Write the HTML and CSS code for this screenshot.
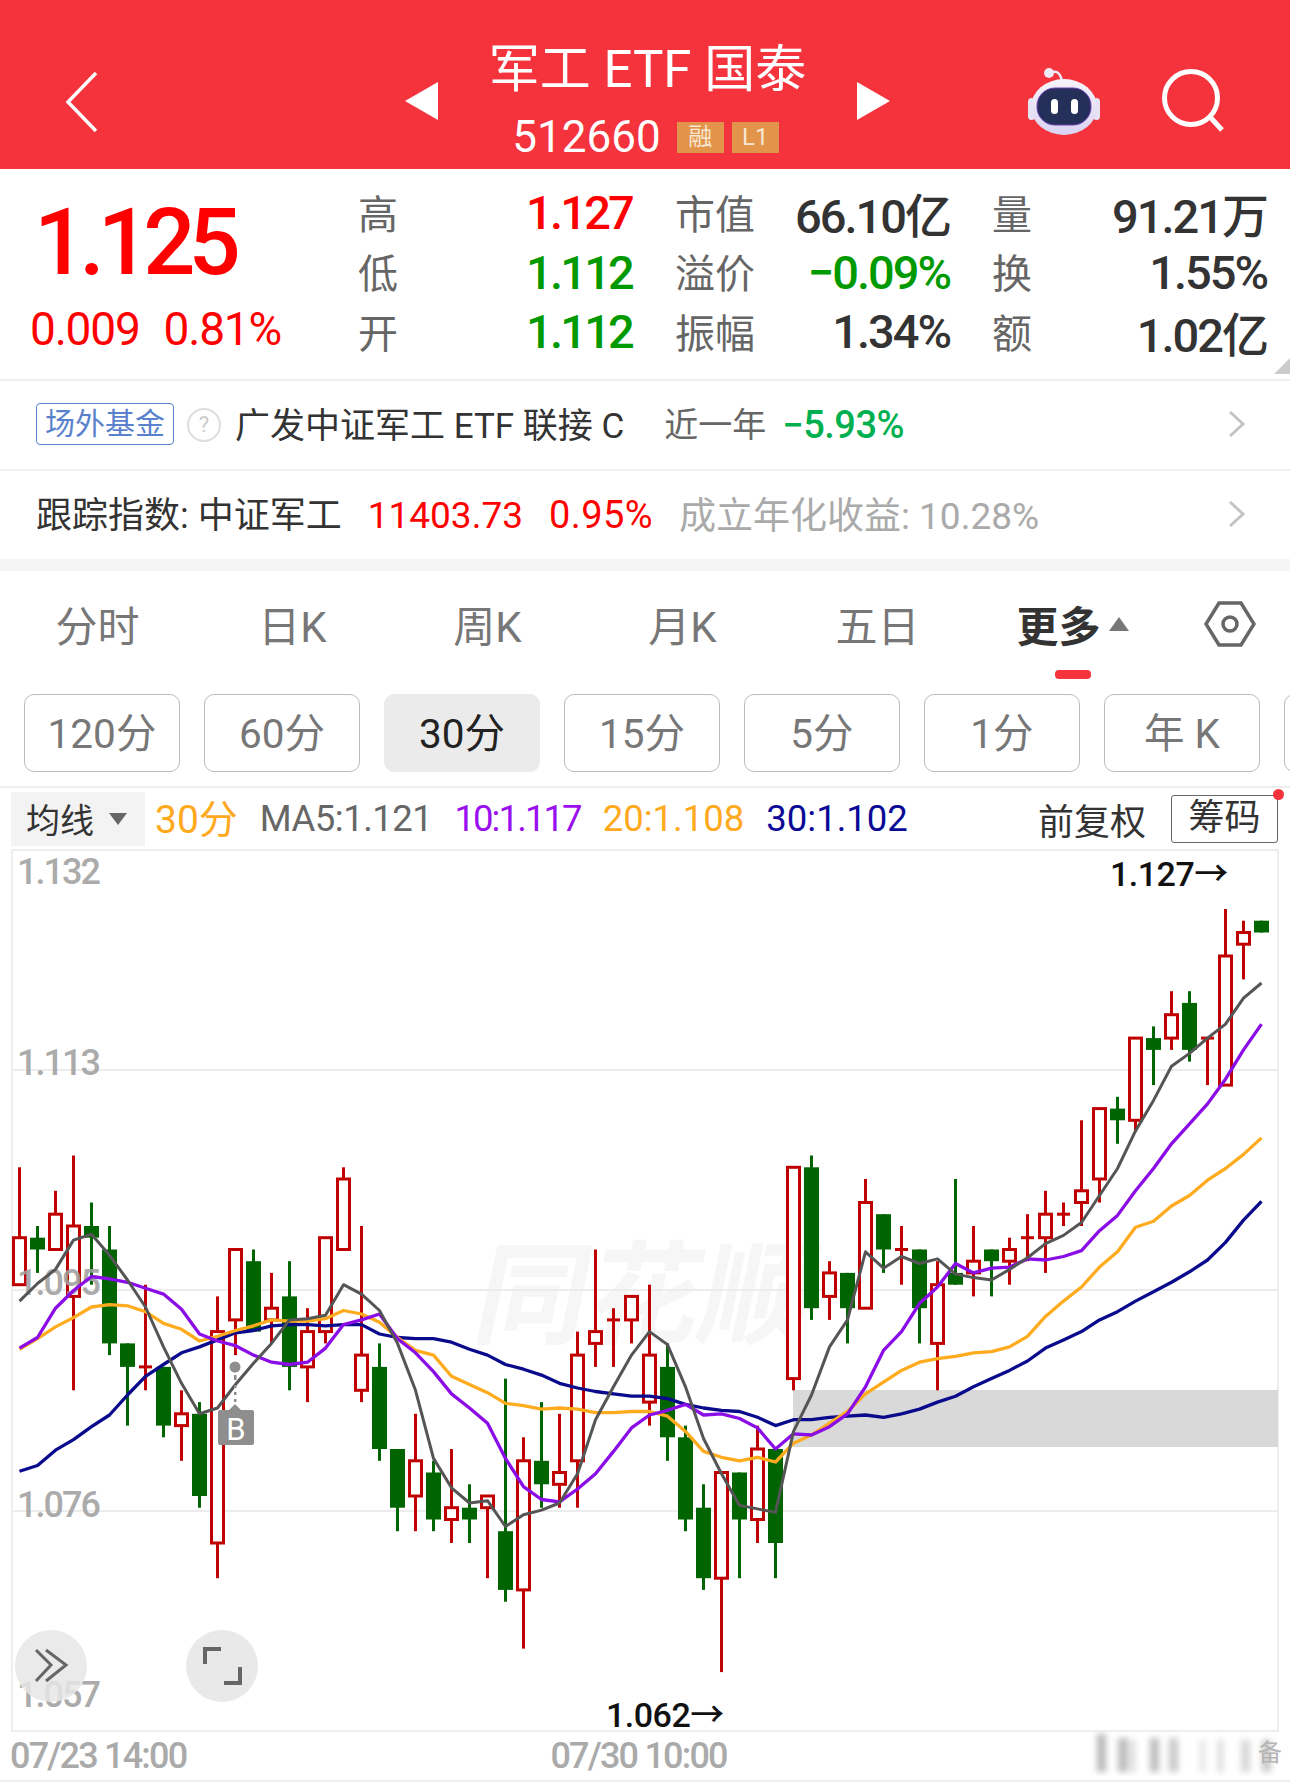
FILE: index.html
```html
<!DOCTYPE html>
<html lang="zh-CN">
<head>
    <meta charset="UTF-8">
    <meta name="viewport" content="width=device-width, initial-scale=1.0">
    <title>军工ETF国泰 512660</title>
    <link rel="stylesheet" href="styles.css">
</head>
<body>
    <header class="top-bar">
        <div class="top-left">
            <svg class="back-icon" width="34" height="62" viewBox="0 0 34 62"><path d="M31 2 L3 31 L31 60" fill="none" stroke="#fff" stroke-width="3.5"/></svg>
        </div>
        <div class="top-center">
            <span class="arrow arrow-left"></span>
            <div class="title-box">
                <div class="title">军工 ETF 国泰</div>
                <div class="code-row">
                    <span class="code">512660</span>
                    <span class="code-tag">融</span>
                    <span class="code-tag">L1</span>
                </div>
            </div>
            <span class="arrow arrow-right"></span>
        </div>
        <div class="top-right">
            <svg class="robot-icon" width="76" height="70" viewBox="0 0 76 70">
                <defs>
                    <linearGradient id="headFill" x1="0" y1="0" x2="0" y2="1">
                        <stop offset="0" stop-color="#f7f4fb"/>
                        <stop offset="1" stop-color="#d9d3f2"/>
                    </linearGradient>
                </defs>
                <path d="M24 7 C30 4 34 6 36 15" fill="none" stroke="#efe9f5" stroke-width="2.5"/>
                <circle cx="23" cy="7" r="5" fill="#eee9f4"/>
                <rect x="2" y="32" width="7" height="22" rx="3.5" fill="#e6e1f3"/>
                <rect x="67" y="32" width="7" height="22" rx="3.5" fill="#e6e1f3"/>
                <ellipse cx="38" cy="41" rx="33" ry="28" fill="url(#headFill)"/>
                <rect x="11" y="22" width="54" height="37" rx="18" fill="#24305a" stroke="#6a3fb0" stroke-width="1"/>
                <rect x="25" y="33" width="7" height="15" rx="3.5" fill="#fff"/>
                <rect x="45" y="33" width="7" height="15" rx="3.5" fill="#fff"/>
            </svg>
            <svg class="search-icon" width="68" height="68" viewBox="0 0 68 68">
                <circle cx="31" cy="31" r="26.5" fill="none" stroke="#fff" stroke-width="5"/>
                <path d="M50 50 L62 63" stroke="#fff" stroke-width="5"/>
            </svg>
        </div>
    </header>

    <section class="quote">
        <div class="quote-main">
            <div class="price">1.125</div>
            <div class="change"><span>0.009</span><span>0.81%</span></div>
        </div>
        <div class="quote-groups">
            <div class="quote-group group-prices">
                <span class="q-label">高</span><span class="q-value up">1.127</span>
                <span class="q-label">低</span><span class="q-value down">1.112</span>
                <span class="q-label">开</span><span class="q-value down">1.112</span>
            </div>
            <div class="quote-group">
                <span class="q-label">市值</span><span class="q-value">66.10亿</span>
                <span class="q-label">溢价</span><span class="q-value down">−0.09%</span>
                <span class="q-label">振幅</span><span class="q-value">1.34%</span>
            </div>
            <div class="quote-group group-last">
                <span class="q-label">量</span><span class="q-value">91.21万</span>
                <span class="q-label">换</span><span class="q-value">1.55%</span>
                <span class="q-label">额</span><span class="q-value">1.02亿</span>
            </div>
        </div>
        <span class="corner-mark"></span>
    </section>

    <a class="info-row fund-row">
        <span class="fund-badge">场外基金</span>
        <span class="help-icon">?</span>
        <span class="fund-name">广发中证军工 ETF 联接 C</span>
        <span class="fund-period">近一年</span>
        <span class="fund-return">−5.93%</span>
        <svg class="row-arrow" width="19" height="26" viewBox="0 0 19 26"><path d="M3 1 L16 13 L3 25" fill="none" stroke="#c4c4c4" stroke-width="3"/></svg>
    </a>

    <a class="info-row index-row">
        <span class="index-name">跟踪指数: 中证军工</span>
        <span class="index-num">11403.73</span>
        <span class="index-num index-pct">0.95%</span>
        <span class="index-yield">成立年化收益: 10.28%</span>
        <svg class="row-arrow" width="19" height="26" viewBox="0 0 19 26"><path d="M3 1 L16 13 L3 25" fill="none" stroke="#c4c4c4" stroke-width="3"/></svg>
    </a>

    <div class="band"></div>

    <nav class="tabs">
        <span class="tab">分时</span>
        <span class="tab">日K</span>
        <span class="tab">周K</span>
        <span class="tab">月K</span>
        <span class="tab">五日</span>
        <span class="tab tab-active">更多<i class="tab-caret"></i></span>
        <span class="tab">
            <svg width="52" height="48" viewBox="0 0 52 48"><path d="M15 3 H37 L50 24 L37 45 H15 L2 24 Z" fill="none" stroke="#666" stroke-width="3.5"/><circle cx="26" cy="24" r="7" fill="none" stroke="#666" stroke-width="3.5"/></svg>
        </span>
    </nav>

    <div class="periods">
        <span class="period">120分</span>
        <span class="period">60分</span>
        <span class="period period-active">30分</span>
        <span class="period">15分</span>
        <span class="period">5分</span>
        <span class="period">1分</span>
        <span class="period">年 K</span>
        <span class="period"></span>
    </div>

    <div class="ma-row">
        <span class="ma-select">均线<i class="ma-caret"></i></span>
        <span class="ma-period c-orange">30分</span>
        <span class="ma-item ma-five c-grey">MA5:1.121</span>
        <span class="ma-item ma-tight c-purple">10:1.117</span>
        <span class="ma-item c-orange">20:1.108</span>
        <span class="ma-item c-navy">30:1.102</span>
        <span class="ma-adjust">前复权</span>
        <span class="ma-chip">筹码</span>
    </div>

    <div id="chart" class="chart"></div>

    <div class="axis">
        <span class="axis-time">07/23 14:00</span>
        <span class="axis-time">07/30 10:00</span>
        <svg class="smudge" width="225" height="46" viewBox="0 0 225 46">
            <defs><filter id="soft"><feGaussianBlur stdDeviation="3"/></filter></defs>
            <g filter="url(#soft)" fill="#9a9a9a">
                <rect x="32" y="2" width="9" height="38" opacity=".7"/>
                <rect x="53" y="6" width="10" height="34" opacity=".65"/>
                <rect x="66" y="8" width="4" height="32" opacity=".45"/>
                <rect x="85" y="6" width="9" height="34" opacity=".65"/>
                <rect x="104" y="6" width="9" height="34" opacity=".55"/>
                <rect x="135" y="8" width="5" height="32" opacity=".3"/>
                <rect x="153" y="8" width="5" height="32" opacity=".4"/>
                <rect x="176" y="8" width="9" height="32" opacity=".4"/>
                <rect x="197" y="8" width="9" height="32" opacity=".55"/>
            </g>
        </svg>
        <span class="axis-mark">备</span>
    </div>

    <script src="script.js"></script>
</body>
</html>
```

FILE: styles.css
```css
* {
    box-sizing: border-box;
}

body {
    margin: 0;
    width: 1290px;
    height: 1782px;
    overflow: hidden;
    background: #ffffff;
    font-family: Roboto, "Noto Sans CJK SC", sans-serif;
    color: #333333;
}

/* top bar */
.top-bar {
    height: 169px;
    background: #f4333d;
    display: grid;
    grid-template-columns: 400px 490px 400px;
    color: #ffffff;
}

.top-left {
    padding: 71px 0 0 65px;
}

.back-icon, .robot-icon, .search-icon {
    display: block;
}

.top-center {
    display: flex;
    justify-content: space-between;
    align-items: flex-start;
    padding: 0 0 0 5px;
}

.arrow {
    margin-top: 82px;
    width: 0;
    height: 0;
    border-top: 19px solid transparent;
    border-bottom: 19px solid transparent;
}

.arrow-left {
    border-right: 33px solid #ffffff;
}

.arrow-right {
    border-left: 33px solid #ffffff;
}

.title-box {
    padding-top: 39px;
    text-align: center;
}

.title {
    font-size: 51px;
    line-height: 62px;
    white-space: nowrap;
}

.code-row {
    margin-top: 14px;
    padding-right: 4px;
    display: flex;
    justify-content: center;
    align-items: center;
    gap: 8px;
    height: 44px;
}

.code {
    font-size: 44px;
    margin-right: 8px;
}

.code-tag {
    width: 47px;
    height: 31px;
    line-height: 31px;
    background: #e2954a;
    color: #f8e6d2;
    font-size: 24px;
    text-align: center;
}

.top-right {
    display: flex;
    justify-content: flex-end;
    align-items: flex-start;
    gap: 58px;
    padding: 66px 62px 0 0;
}

.search-icon {
    margin-top: 1px;
}

/* quote */
.quote {
    position: relative;
    height: 212px;
    display: flex;
    border-bottom: 2px solid #eeeeee;
}

.quote-main {
    width: 358px;
    padding: 20px 0 0 30px;
    color: #ff0000;
}

.price {
    font-size: 92px;
    line-height: 108px;
    font-weight: 500;
    letter-spacing: -7px;
    padding-left: 4px;
}

.change {
    display: flex;
    gap: 24px;
    margin-top: 6px;
    font-size: 46px;
    line-height: 52px;
    letter-spacing: -1.2px;
}

.quote-groups {
    display: flex;
    gap: 43px;
    padding-top: 14px;
}

.quote-group {
    width: 275px;
    display: grid;
    grid-template-columns: auto 1fr;
    grid-auto-rows: 59.5px;
    align-items: center;
}

.group-prices {
    width: 274px;
}

.group-last {
    margin-left: -1px;
}

.q-label {
    font-size: 40px;
    color: #666666;
    margin-bottom: 2px;
}

.q-value {
    font-size: 47px;
    font-weight: 500;
    text-align: right;
    color: #333333;
    letter-spacing: -2px;
    white-space: nowrap;
}

.group-prices .q-value {
    letter-spacing: -2.8px;
}

.up {
    color: #ff0000;
}

.down {
    color: #009900;
}

.corner-mark {
    position: absolute;
    right: 0;
    bottom: 5px;
    width: 0;
    height: 0;
    border-left: 16px solid transparent;
    border-bottom: 16px solid #cccccc;
}

/* info rows */
.info-row {
    display: flex;
    align-items: center;
    position: relative;
    height: 90px;
    padding-left: 36px;
    border-bottom: 2px solid #f0f0f0;
}

.fund-badge {
    width: 138px;
    height: 42px;
    line-height: 40px;
    border: 1.5px solid #5a82cc;
    border-radius: 4px;
    color: #5a82cc;
    font-size: 30px;
    text-align: center;
    margin-top: -2px;
}

.help-icon {
    width: 34px;
    height: 34px;
    margin-left: 13px;
    border: 2.5px solid #dddddd;
    border-radius: 50%;
    color: #cccccc;
    font-size: 22px;
    line-height: 29px;
    text-align: center;
}

.fund-name {
    margin: 0 0 6px 14px;
    font-size: 35px;
    color: #333333;
    white-space: nowrap;
}

.fund-period {
    margin: 0 0 5px 40px;
    font-size: 34px;
    color: #666666;
}

.fund-return {
    margin-left: 16px;
    font-size: 38px;
    font-weight: 500;
    color: #00b050;
    letter-spacing: -0.5px;
}

.row-arrow {
    position: absolute;
    right: 44px;
    top: 30px;
}

.index-row {
    height: 88px;
    border-bottom: 0;
}

.index-name {
    margin-bottom: 6px;
    font-size: 36px;
    color: #333333;
    white-space: nowrap;
}

.index-num {
    margin-left: 26px;
    font-size: 37px;
    color: #ff0000;
}

.index-pct {
    font-size: 38px;
    letter-spacing: 0.4px;
}

.index-yield {
    margin: 0 0 5px 26px;
    font-size: 37px;
    color: #aaaaaa;
    white-space: nowrap;
}

.band {
    height: 12px;
    background: #f5f5f5;
}

/* tabs */
.tabs {
    height: 123px;
    display: grid;
    grid-template-columns: repeat(6, 195px) 120px;
    position: relative;
}

.tab {
    display: flex;
    justify-content: center;
    align-items: center;
    padding-bottom: 18px;
    font-size: 42px;
    color: #777777;
}

.tab-active {
    font-weight: 700;
    color: #333333;
    position: relative;
}

.tab-active::after {
    content: "";
    position: absolute;
    left: 80px;
    top: 99px;
    width: 36px;
    height: 9px;
    background: #f4333d;
    border-radius: 4px;
}

.tab-caret {
    margin-left: 8px;
    width: 0;
    height: 0;
    border-left: 10px solid transparent;
    border-right: 10px solid transparent;
    border-bottom: 14px solid #777777;
}

.periods {
    display: flex;
    gap: 26px;
    padding-left: 24px;
    height: 94px;
    border-bottom: 2px solid #eeeeee;
    overflow: hidden;
}

.period {
    flex: 0 0 156px;
    height: 78px;
    border: 1.5px solid #bbbbbb;
    border-radius: 10px;
    color: #777777;
    font-size: 40.5px;
    line-height: 78px;
    text-align: center;
}

.period + .period {
    margin-left: -2px;
}

.period-active {
    background: #ebebeb;
    border-color: #ebebeb;
    color: #222222;
}

/* ma row */
.ma-row {
    display: flex;
    align-items: center;
    height: 61px;
    padding: 0 12px 0 11px;
    position: relative;
}

.ma-select {
    display: flex;
    align-items: center;
    width: 134px;
    height: 54px;
    padding-left: 15px;
    background: #f3f3f3;
    color: #333333;
    font-size: 34px;
}

.ma-caret {
    margin-left: 15px;
    width: 0;
    height: 0;
    border-left: 9px solid transparent;
    border-right: 9px solid transparent;
    border-top: 12px solid #666666;
}

.ma-period {
    margin: 0 0 6px 10px;
    font-size: 39px;
    white-space: nowrap;
}

.ma-item {
    margin-left: 22px;
    font-size: 36.5px;
    white-space: nowrap;
}

.ma-five {
    letter-spacing: -0.5px;
}

.ma-tight {
    letter-spacing: -1.9px;
}

.c-orange {
    color: #ffa91f;
}

.c-grey {
    color: #666666;
}

.c-purple {
    color: #9a10ee;
}

.c-navy {
    color: #0a0a96;
}

.ma-adjust {
    margin-left: auto;
    font-size: 36px;
    color: #333333;
}

.ma-chip {
    width: 107px;
    height: 48px;
    margin-left: 25px;
    border: 1.5px solid #666666;
    border-radius: 3px;
    font-size: 36px;
    line-height: 44px;
    text-align: center;
    position: relative;
}

.ma-chip::after {
    content: "";
    position: absolute;
    right: -7px;
    top: -7px;
    width: 11px;
    height: 11px;
    border-radius: 50%;
    background: #f4333d;
}

/* chart */
.chart {
    height: 883px;
}

.chart svg {
    display: block;
}

.axis {
    position: relative;
    height: 50px;
    border-bottom: 2px solid #eeeeee;
    padding-left: 10px;
    display: flex;
    gap: 364px;
    align-items: center;
}

.axis-time {
    font-size: 36px;
    font-weight: 500;
    color: #aaaaaa;
    letter-spacing: -1.8px;
}

.smudge {
    position: absolute;
    right: 0;
    top: 0;
}

.axis-mark {
    position: absolute;
    right: 8px;
    top: 6px;
    font-size: 24px;
    line-height: 30px;
    color: #b5b5b5;
}
```

FILE: script.js
```js
// candles: high, body top, body bottom, low (prices in 0.001), r = up, g = down
const candles = [
    [1105,1099,1095,1095,"r"],[1100,1099,1098,1096,"g"],[1103,1101,1098,1098,"r"],[1106,1100,1094,1086,"r"],
    [1102,1100,1099,1095,"g"],[1100,1098,1090,1089,"g"],[1090,1090,1088,1083,"g"],[1095,1088,1088,1086,"r"],
    [1088,1088,1083,1082,"g"],[1086,1084,1083,1080,"r"],[1085,1084,1077,1076,"g"],[1094,1091,1073,1070,"r"],
    [1098,1098,1092,1089,"r"],[1098,1097,1091,1091,"g"],[1096,1093,1092,1090,"r"],[1097,1094,1088,1086,"g"],
    [1093,1091,1088,1085,"r"],[1099,1099,1091,1090,"r"],[1105,1104,1098,1098,"r"],[1100,1089,1086,1085,"r"],
    [1090,1088,1081,1080,"g"],[1081,1081,1076,1074,"g"],[1084,1080,1077,1074,"r"],[1080,1079,1075,1074,"g"],
    [1081,1076,1075,1073,"r"],[1078,1076,1075,1073,"g"],[1077,1077,1076,1070,"r"],[1087,1074,1069,1068,"g"],
    [1082,1080,1069,1064,"r"],[1085,1080,1078,1076,"g"],[1084,1079,1078,1076,"r"],[1091,1089,1080,1076,"r"],
    [1098,1091,1090,1088,"r"],[1093,1092,1092,1088,"r"],[1094,1094,1092,1090,"r"],[1095,1089,1085,1083,"r"],
    [1090,1088,1082,1080,"g"],[1083,1082,1075,1074,"g"],[1078,1076,1070,1069,"g"],[1079,1079,1070,1062,"r"],
    [1079,1079,1075,1070,"g"],[1083,1081,1075,1073,"r"],[1081,1081,1073,1070,"g"],[1105,1105,1087,1086,"r"],
    [1106,1105,1093,1092,"g"],[1097,1096,1094,1092,"r"],[1096,1096,1093,1090,"g"],[1104,1102,1093,1093,"r"],
    [1101,1101,1098,1096,"g"],[1100,1098,1098,1095,"r"],[1098,1098,1093,1090,"g"],[1097,1095,1090,1086,"r"],
    [1104,1096,1095,1095,"g"],[1100,1097,1096,1094,"r"],[1098,1098,1097,1094,"g"],[1099,1098,1097,1095,"r"],
    [1101,1099,1099,1097,"r"],[1103,1101,1099,1096,"r"],[1102,1101,1101,1100,"r"],[1109,1103,1102,1100,"r"],
    [1110,1110,1104,1102,"r"],[1111,1110,1109,1107,"g"],[1116,1116,1109,1108,"r"],[1117,1116,1115,1112,"g"],
    [1120,1118,1116,1115,"r"],[1120,1119,1115,1114,"g"],[1116,1116,1116,1112,"r"],[1127,1123,1112,1112,"r"],
    [1126,1125,1124,1121,"r"],[1126,1126,1125,1125,"g"]
];

const ma5 = [1093.6,1095.1,1096.3,1098.8,1099.3,1097.5,1095.4,1093.1,1089.7,1086.6,1084,1084.5,1086.5,1088.3,1090,1092,1092.1,1092.4,1095,1094.2,1092.8,1090,1086,1080.2,1077.7,1076.4,1076.6,1074.4,1075.4,1075.8,1076.4,1078.9,1083.5,1086.3,1089,1091,1089.9,1086.3,1081.9,1078.9,1076.2,1075.9,1075.6,1082.5,1085.6,1089.7,1092,1097.8,1096.4,1097.4,1096.8,1097.2,1095.9,1095.6,1095.4,1096.3,1097.3,1098.5,1099.2,1100.3,1102.6,1104.9,1108.1,1110.7,1113.6,1114.7,1116,1117.2,1119.4,1120.7];
const ma10 = [1089.6,1090.5,1093,1094.5,1095.7,1095.5,1095.2,1094.7,1094.2,1092.9,1090.8,1090.2,1089.8,1089,1088.4,1088.2,1088.4,1089.6,1091.6,1092,1092.5,1090.4,1089.2,1087.6,1085.7,1084.5,1083.2,1080.2,1077.8,1076.7,1076.5,1077.6,1078.9,1080.8,1082.8,1083.9,1084.3,1084.8,1083.9,1084,1083.6,1082.8,1081,1082.3,1082.2,1082.9,1084,1086.3,1089.4,1091,1093.4,1094.8,1096.8,1096,1096.4,1096.5,1097.2,1097.1,1097.4,1097.9,1099.6,1100.9,1103,1104.9,1107,1108.7,1110.4,1112.5,1115,1117.2];
const ma20 = [1089.5,1090.4,1091.4,1092.2,1093.1,1093.3,1093.2,1092.7,1091.7,1091.2,1090.2,1090.6,1091.1,1091.5,1092,1091.9,1091.9,1092.1,1092.8,1092.5,1091.8,1090.5,1089.4,1089,1087.2,1086.5,1085.8,1084.9,1084.7,1084.4,1084.5,1084.4,1084.1,1084.1,1084.2,1084.2,1083.8,1082.5,1080.8,1080.3,1080,1080.3,1079.9,1081.5,1082.2,1083.2,1084.2,1085.7,1086.7,1087.7,1088.4,1088.7,1088.9,1089.2,1089.3,1089.7,1090.6,1092.3,1093.6,1094.8,1096.5,1097.8,1099.9,1100.4,1101.7,1102.6,1103.9,1104.9,1106.1,1107.5];
const ma30 = [1079.1,1079.6,1080.9,1081.8,1082.9,1083.9,1085.6,1087.2,1088.2,1089.2,1089.7,1090.3,1090.9,1091.1,1091.5,1091.6,1091.6,1091.5,1091.6,1091.6,1090.8,1090.5,1090.4,1090.4,1090.1,1089.5,1089,1088.2,1087.8,1087.3,1086.6,1086.2,1085.9,1085.7,1085.5,1085.5,1085.3,1084.8,1084.5,1084.3,1084.2,1083.7,1083,1083.5,1083.5,1083.7,1083.8,1083.9,1083.7,1084,1084.4,1085,1085.5,1086.3,1087,1087.7,1088.5,1089.6,1090.3,1091,1092,1092.7,1093.6,1094.4,1095.2,1096.1,1097.1,1098.6,1100.5,1102.1];

const RED = "#c00000";
const GREEN = "#006400";

function px(i) { return 19.5 + 18 * i; }
function py(p) { return +(909 + (1127 - p) * 11.74).toFixed(1); }

function drawCandle(c, i) {
    const x = px(i);
    const color = c[4] === "r" ? RED : GREEN;
    let out = `<rect x="${x - 1.5}" y="${py(c[0])}" width="3" height="${(py(c[3]) - py(c[0])).toFixed(1)}" fill="${color}"/>`;
    if (c[1] === c[2]) {
        out += `<rect x="${x - 6.5}" y="${py(c[1]) - 1.5}" width="13" height="3" fill="${color}"/>`;
    } else if (c[4] === "r") {
        out += `<rect x="${x - 6}" y="${py(c[1])}" width="12" height="${(py(c[2]) - py(c[1])).toFixed(1)}" fill="#fff" stroke="${color}" stroke-width="3"/>`;
    } else {
        out += `<rect x="${x - 7.5}" y="${py(c[1])}" width="15" height="${(py(c[2]) - py(c[1])).toFixed(1)}" fill="${color}"/>`;
    }
    return out;
}

function drawLine(values, color, width) {
    const pts = values.map((v, i) => px(i) + "," + py(v)).join(" ");
    return `<polyline points="${pts}" fill="none" stroke="${color}" stroke-width="${width}" stroke-linejoin="round"/>`;
}

const axisLabels = [["1.132", 884], ["1.113", 1075], ["1.095", 1295], ["1.076", 1517], ["1.057", 1707]];

let svg = `<svg width="1290" height="903" viewBox="0 849 1290 903">`;
svg += `<rect x="12" y="850" width="1266" height="881" fill="#fff" stroke="#eee" stroke-width="2"/>`;
svg += `<text transform="translate(470 1335) skewX(-12)" font-size="112" font-weight="700" fill="#f6f6f6" font-family="'Noto Sans CJK SC', sans-serif">同花顺</text>`;
svg += `<rect x="793" y="1390" width="485" height="57" fill="#d9d9d9"/>`;
[1070, 1290, 1511].forEach(y => {
    svg += `<rect x="12" y="${y - 1}" width="1266" height="2" fill="#ececec"/>`;
});
svg += candles.map(drawCandle).join("");
axisLabels.forEach(a => {
    svg += `<text x="17" y="${a[1]}" font-size="36" font-weight="500" fill="#a0a0a0" fill-opacity=".9" letter-spacing="-2">${a[0]}</text>`;
});
svg += drawLine(ma30, "#0a0a8c", 3.3);
svg += drawLine(ma20, "#ffab1f", 3.3);
svg += drawLine(ma10, "#8a0ce6", 3.3);
svg += drawLine(ma5, "#555555", 3);

// high and low marks
svg += `<text x="1110" y="886" font-size="34" font-weight="500" fill="#111" letter-spacing="-0.5">1.127→</text>`;
svg += `<text x="606" y="1727" font-size="34" font-weight="500" fill="#111" letter-spacing="-0.5">1.062→</text>`;

// buy mark
svg += `<g fill="#8e8e8e">`;
svg += `<circle cx="235" cy="1367" r="5.5"/><rect x="234" y="1375" width="2.5" height="5"/><rect x="234" y="1385" width="2.5" height="3"/><rect x="234" y="1392" width="2.5" height="3"/><rect x="234" y="1399" width="2.5" height="3"/>`;
svg += `<path d="M218 1412 a2 2 0 0 1 2 -2 H229 L235 1404 L241 1410 H252 a2 2 0 0 1 2 2 V1443 a2 2 0 0 1 -2 2 H220 a2 2 0 0 1 -2 -2 Z"/>`;
svg += `</g>`;
svg += `<text x="236" y="1440" font-size="31" fill="#fff" text-anchor="middle">B</text>`;

// round chart buttons
svg += `<circle cx="51" cy="1666" r="36" fill="#e6e6e6" opacity=".85"/>`;
svg += `<path d="M36 1650 L51 1665 L36 1681 M46 1650 L66 1665 L46 1681" fill="none" stroke="#666" stroke-width="3"/>`;
svg += `<circle cx="222" cy="1666" r="36" fill="#e9e9e9"/>`;
svg += `<path d="M205 1664 V1649 H221 M240 1667 V1683 H224" fill="none" stroke="#666" stroke-width="4"/>`;
svg += `</svg>`;

document.getElementById("chart").innerHTML = svg;
```
